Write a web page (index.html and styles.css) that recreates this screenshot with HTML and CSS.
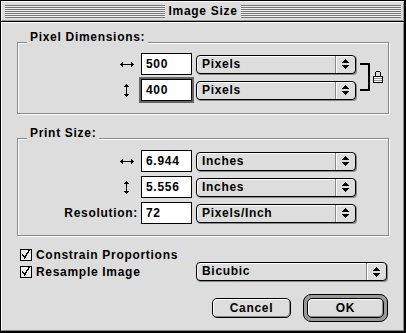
FILE: index.html
```html
<!DOCTYPE html>
<html lang="en">
<head>
  <meta charset="UTF-8" />
  <title>Image Size</title>
  <link rel="stylesheet" href="styles.css">
</head>
<body>
  <div class="window">
    <div class="titlebar">
      <div class="stripes"></div>
      <div class="title">Image Size</div>
      <div class="stripes"></div>
    </div>

    <div class="content">
      <!-- Pixel dimensions, linked by the bracket -->
      <div class="group group-pixels">
        <div class="group-label">Pixel Dimensions:</div>
        <div class="group-inner">
          <div class="rows">
            <div class="row">
              <span class="label"><svg class="arrow" width="14" height="5" viewBox="0 0 14 5" shape-rendering="crispEdges"><path d="M0 2h1v1H0zM1 1h1v3H1zM2 0h1v5H2zM3 2h8v1H3zM11 0h1v5h-1zM12 1h1v3h-1zM13 2h1v1h-1z"/></svg></span>
              <div class="field">500</div>
              <div class="popup"><span class="popup-text">Pixels</span><span class="popup-arrows"><svg width="7" height="10" viewBox="0 0 7 10" shape-rendering="crispEdges"><path d="M3 0h1v1H3zM2 1h3v1H2zM1 2h5v1H1zM0 3h7v1H0zM0 6h7v1H0zM1 7h5v1H1zM2 8h3v1H2zM3 9h1v1H3z"/></svg></span></div>
            </div>
            <div class="row">
              <span class="label"><svg class="arrow arrow-v" width="5" height="13" viewBox="0 0 5 13" shape-rendering="crispEdges"><path d="M2 0h1v1H2zM1 1h3v1H1zM0 2h5v1H0zM2 3h1v7H2zM0 10h5v1H0zM1 11h3v1H1zM2 12h1v1H2z"/></svg></span>
              <div class="field focus">400</div>
              <div class="popup"><span class="popup-text">Pixels</span><span class="popup-arrows"><svg width="7" height="10" viewBox="0 0 7 10" shape-rendering="crispEdges"><path d="M3 0h1v1H3zM2 1h3v1H2zM1 2h5v1H1zM0 3h7v1H0zM0 6h7v1H0zM1 7h5v1H1zM2 8h3v1H2zM3 9h1v1H3z"/></svg></span></div>
            </div>
          </div>
          <div class="link">
            <div class="bracket"></div>
            <svg class="lock" width="10" height="12" viewBox="0 0 10 12" shape-rendering="crispEdges">
              <path d="M3 0h4v1H3zM2 1h1v4H2zM7 1h1v4H7z"/>
              <rect x="0.5" y="5.5" width="9" height="6" fill="#fff" stroke="#000"/>
              <path d="M1 7h8v1H1zM1 9h8v1H1z" fill="#999"/>
            </svg>
          </div>
        </div>
      </div>

      <div class="group group-print">
        <div class="group-label">Print Size:</div>
        <div class="rows">
          <div class="row">
            <span class="label"><svg class="arrow" width="14" height="5" viewBox="0 0 14 5" shape-rendering="crispEdges"><path d="M0 2h1v1H0zM1 1h1v3H1zM2 0h1v5H2zM3 2h8v1H3zM11 0h1v5h-1zM12 1h1v3h-1zM13 2h1v1h-1z"/></svg></span>
            <div class="field">6.944</div>
            <div class="popup"><span class="popup-text">Inches</span><span class="popup-arrows"><svg width="7" height="10" viewBox="0 0 7 10" shape-rendering="crispEdges"><path d="M3 0h1v1H3zM2 1h3v1H2zM1 2h5v1H1zM0 3h7v1H0zM0 6h7v1H0zM1 7h5v1H1zM2 8h3v1H2zM3 9h1v1H3z"/></svg></span></div>
          </div>
          <div class="row">
            <span class="label"><svg class="arrow arrow-v" width="5" height="13" viewBox="0 0 5 13" shape-rendering="crispEdges"><path d="M2 0h1v1H2zM1 1h3v1H1zM0 2h5v1H0zM2 3h1v7H2zM0 10h5v1H0zM1 11h3v1H1zM2 12h1v1H2z"/></svg></span>
            <div class="field">5.556</div>
            <div class="popup"><span class="popup-text">Inches</span><span class="popup-arrows"><svg width="7" height="10" viewBox="0 0 7 10" shape-rendering="crispEdges"><path d="M3 0h1v1H3zM2 1h3v1H2zM1 2h5v1H1zM0 3h7v1H0zM0 6h7v1H0zM1 7h5v1H1zM2 8h3v1H2zM3 9h1v1H3z"/></svg></span></div>
          </div>
          <div class="row">
            <span class="label">Resolution:</span>
            <div class="field">72</div>
            <div class="popup"><span class="popup-text">Pixels/Inch</span><span class="popup-arrows"><svg width="7" height="10" viewBox="0 0 7 10" shape-rendering="crispEdges"><path d="M3 0h1v1H3zM2 1h3v1H2zM1 2h5v1H1zM0 3h7v1H0zM0 6h7v1H0zM1 7h5v1H1zM2 8h3v1H2zM3 9h1v1H3z"/></svg></span></div>
          </div>
        </div>
      </div>

      <div class="options">
        <div class="check">
          <svg width="12" height="12" viewBox="0 0 12 12" shape-rendering="crispEdges"><rect x="0.5" y="0.5" width="11" height="11" fill="#eee" stroke="#000"/><path d="M2 5h1v2H2zM3 6h1v2H3zM4 7h1v3H4zM5 6h1v3H5zM6 4h1v3H6zM7 3h1v2H7zM8 1h1v3H8zM9 0h1v2H9z"/></svg>
          <span>Constrain Proportions</span>
        </div>
        <div class="check check-second">
          <svg width="12" height="12" viewBox="0 0 12 12" shape-rendering="crispEdges"><rect x="0.5" y="0.5" width="11" height="11" fill="#eee" stroke="#000"/><path d="M2 5h1v2H2zM3 6h1v2H3zM4 7h1v3H4zM5 6h1v3H5zM6 4h1v3H6zM7 3h1v2H7zM8 1h1v3H8zM9 0h1v2H9z"/></svg>
          <span>Resample Image</span>
        </div>
        <div class="popup popup-wide"><span class="popup-text">Bicubic</span><span class="popup-arrows"><svg width="7" height="10" viewBox="0 0 7 10" shape-rendering="crispEdges"><path d="M3 0h1v1H3zM2 1h3v1H2zM1 2h5v1H1zM0 3h7v1H0zM0 6h7v1H0zM1 7h5v1H1zM2 8h3v1H2zM3 9h1v1H3z"/></svg></span></div>
      </div>

      <div class="buttons">
        <div class="button">Cancel</div>
        <div class="default-ring"><div class="button button-ok">OK</div></div>
      </div>
    </div>
  </div>
</body>
</html>
```

FILE: styles.css
```css
body {
  margin: 0;
  background: #000;
  color: #000;
  font: bold 12px "Liberation Sans", Arial, sans-serif;
  letter-spacing: 0.7px;
}
.window {
  width: 406px;
  height: 333px;
  box-sizing: border-box;
  border: solid #000;
  border-width: 1px 2px 2px 1px;
  background: #ddd;
  display: flex;
  flex-direction: column;
}
.titlebar {
  height: 20px;
  display: flex;
  padding: 0 3px 0 4px;
  border-bottom: 1px solid #000;
  background: #ddd;
  box-shadow: inset 1px 1px 0 #fff, inset -1px -1px 0 #999;
}
.stripes {
  flex: 1;
  height: 13px;
  margin-top: 4px;
  background: repeating-linear-gradient(#777 0 1px, #eee 1px 2px);
}
.title {
  padding: 0 3px;
  line-height: 21px;
}
.content {
  flex: 1;
  border: 1px solid;
  border-color: #fff #888 #888 #fff;
  padding: 19px 0 0 15px;
}
.group {
  position: relative;
  width: 372px;
  box-sizing: border-box;
  border: 1px solid #888;
  box-shadow: inset 1px 1px 0 #fff, 1px 1px 0 #fff;
}
.group-pixels {
  height: 72px;
  padding-top: 10px;
}
.group-print {
  height: 98px;
  margin-top: 24px;
  padding-top: 11px;
}
.group-label {
  position: absolute;
  top: -13px;
  left: 9px;
  padding: 0 3px;
  line-height: 15px;
  background: #ddd;
}
.group-inner {
  display: flex;
  align-items: flex-start;
}
.rows {
  display: flex;
  flex-direction: column;
  gap: 4px;
}
.row {
  display: flex;
  align-items: center;
  height: 22px;
}
.label {
  width: 120px;
  margin-right: 3px;
  display: flex;
  justify-content: flex-end;
  align-items: center;
}
.arrow {
  display: block;
  margin-right: 4px;
}
.arrow-v {
  margin-right: 9px;
}
.field {
  width: 51px;
  height: 22px;
  box-sizing: border-box;
  margin-right: 4px;
  padding-left: 4px;
  border: 1px solid #000;
  background: #fff;
  line-height: 20px;
}
.field.focus {
  box-shadow: 0 0 0 2px #666;
}
.popup {
  width: 160px;
  height: 19px;
  box-sizing: border-box;
  display: flex;
  border: 1px solid #000;
  border-radius: 4px;
  background: #ddd;
  box-shadow: inset 1px 1px 0 #fff, 1px 1px 0 #888;
}
.popup-text {
  flex: 1;
  padding-left: 5px;
  line-height: 17px;
}
.popup-arrows {
  width: 19px;
  display: flex;
  align-items: center;
  justify-content: center;
  border-left: 1px solid #888;
  box-shadow: inset 1px 0 0 #fff;
}
.popup-arrows svg {
  display: block;
}
.link {
  display: flex;
  align-items: center;
  margin: 10px 0 0 4px;
}
.bracket {
  width: 8px;
  height: 24px;
  border: 2px solid #000;
  border-left: 0;
}
.lock {
  display: block;
  margin-left: 3px;
}
.options {
  display: grid;
  grid-template-columns: 176px 191px;
  grid-auto-rows: 17px;
  align-items: center;
  margin: 10px 0 0 3px;
}
.check {
  display: flex;
  align-items: center;
  gap: 4px;
  grid-column: 1;
}
.check svg {
  display: block;
}
.check-second {
  grid-row: 2;
}
.popup-wide {
  width: 191px;
  grid-column: 2;
  grid-row: 2;
}
.buttons {
  width: 371px;
  margin-top: 14px;
  display: flex;
  justify-content: flex-end;
  align-items: center;
  gap: 12px;
}
.button {
  width: 79px;
  height: 20px;
  box-sizing: border-box;
  border: 1px solid #000;
  border-radius: 5px;
  background: #ddd;
  box-shadow: inset 1px 1px 0 #fff, inset -1px -1px 0 #888;
  text-align: center;
  line-height: 18px;
}
.default-ring {
  padding: 3px;
  border: 1px solid #000;
  border-radius: 8px;
  background: #999;
}
.button-ok {
  width: 77px;
}
```
